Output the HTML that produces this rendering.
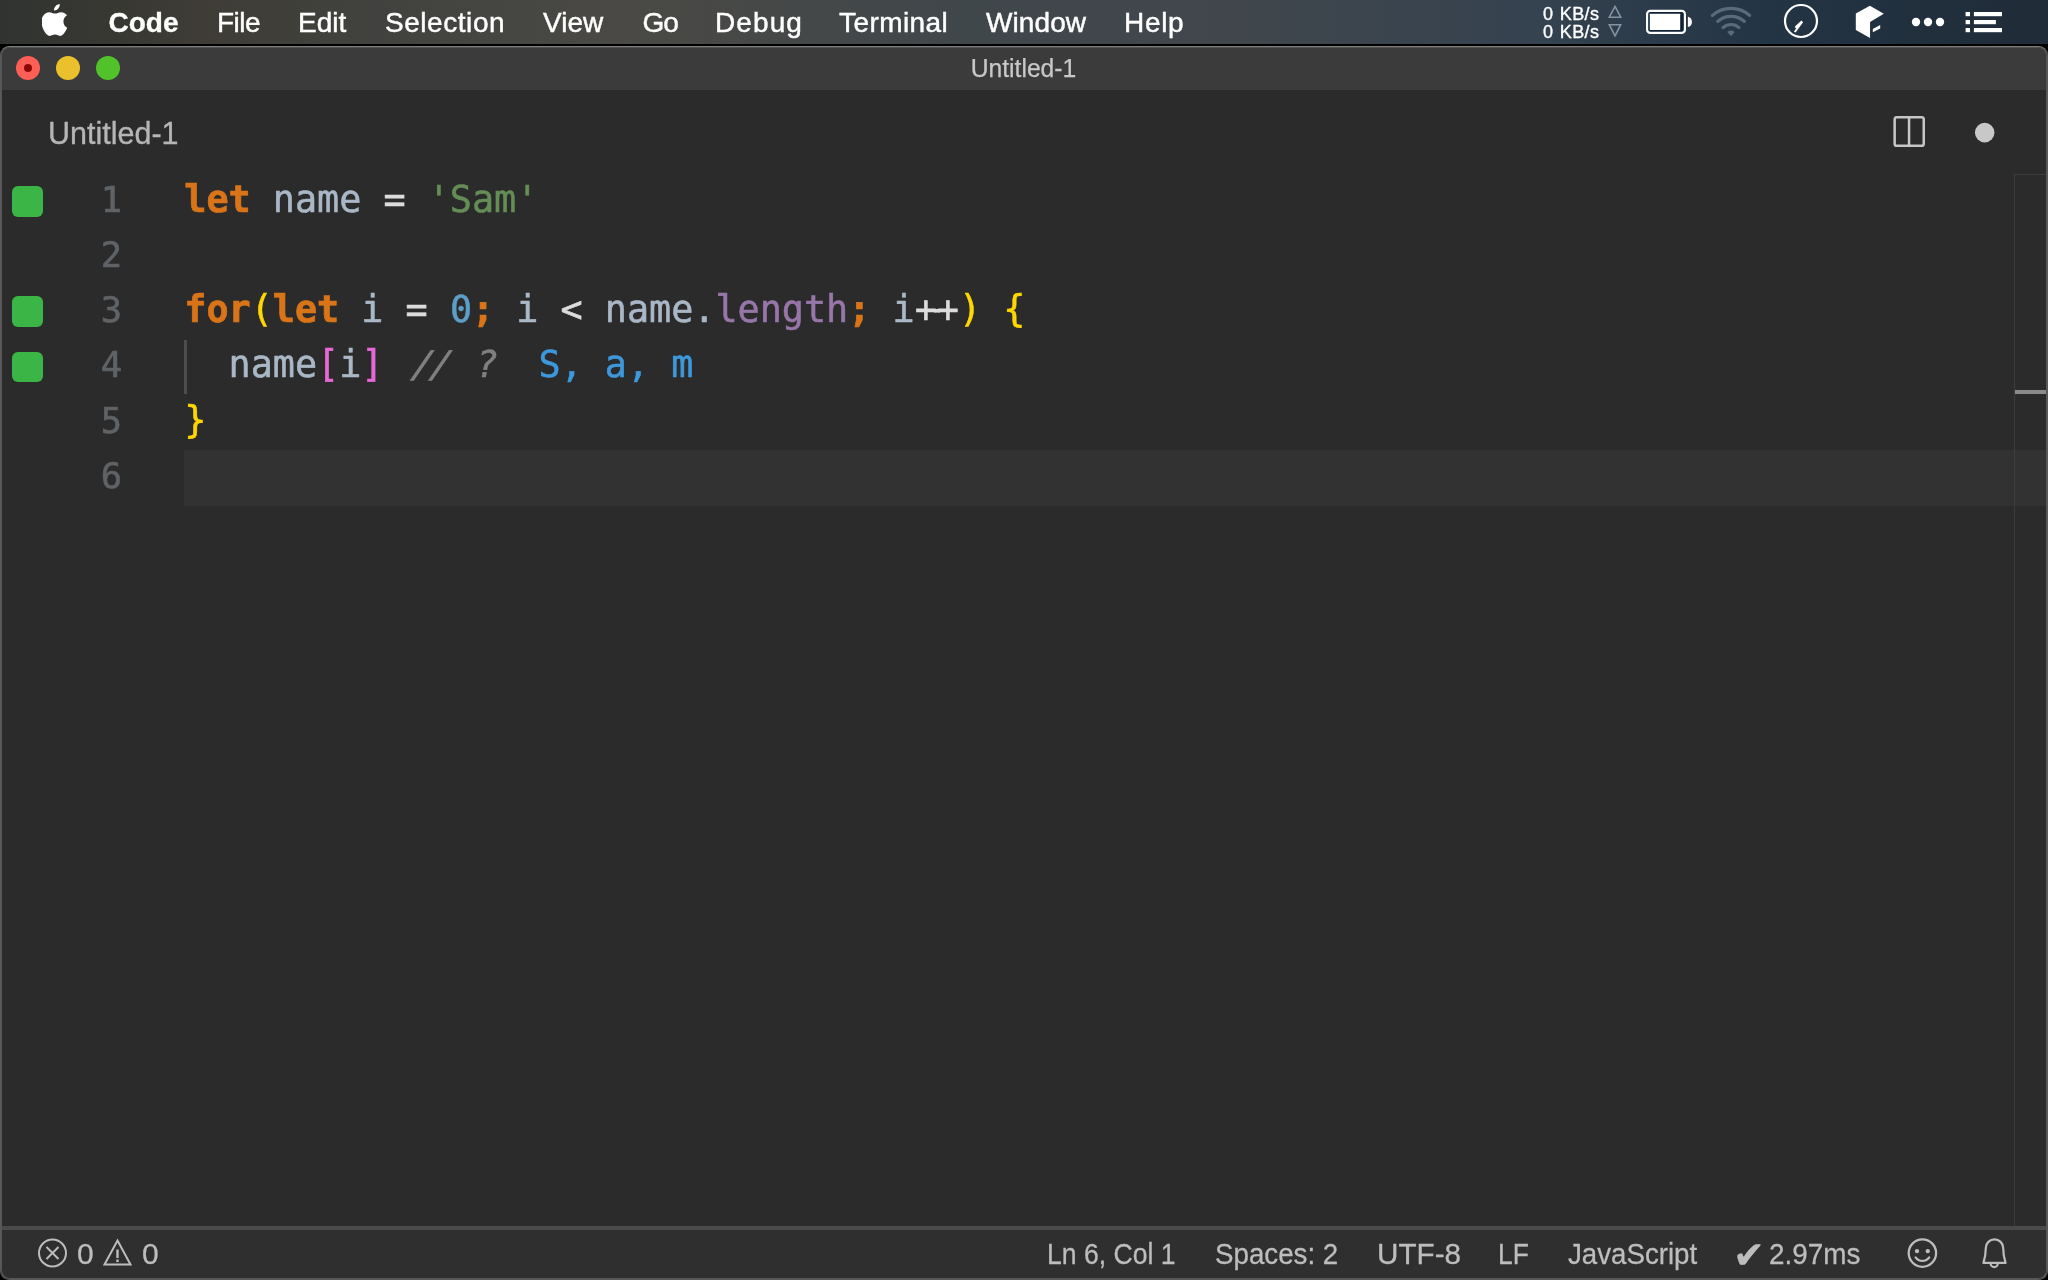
<!DOCTYPE html>
<html lang="en">
<head>
<meta charset="utf-8">
<title>Untitled-1</title>
<style>
*{margin:0;padding:0;box-sizing:border-box}
html,body{width:2048px;height:1280px;overflow:hidden;background:#000}
body{position:relative;font-family:"Liberation Sans",sans-serif;-webkit-font-smoothing:antialiased}
.abs{position:absolute}
/* ---------- mac menu bar ---------- */
#menubar{will-change:transform;position:absolute;left:0;top:0;width:2048px;height:44px;
 background:linear-gradient(90deg,#303330 0px,#3e3c35 200px,#41423f 368px,#4a4945 623px,#40474b 967px,#41474c 1200px,#35424f 1540px,#233444 1768px,#202c38 2028px,#202c38 2048px);}
#menubar .mi{position:absolute;top:1px;height:44px;line-height:44px;font-size:28px;color:#fff;white-space:nowrap;transform-origin:0 50%;-webkit-text-stroke:0.45px #fff}
#menubar .mi.b{font-weight:bold;-webkit-text-stroke:0.3px #fff}
#menuline{position:absolute;left:0;top:43.500px;width:2048px;height:2.500px;background:linear-gradient(180deg,rgba(0,0,0,0) 0,rgba(0,0,0,0.5) 0.800px,#000 1.600px,#000 2.500px)}
.net{position:absolute;left:1543px;font-size:18px;line-height:18px;color:#fff;white-space:nowrap;letter-spacing:0.400px;word-spacing:1px;-webkit-text-stroke:0.35px #fff}
/* ---------- window ---------- */
#win{will-change:transform;position:absolute;left:0;top:46px;width:2048px;height:1234px;background:#2b2b2b;border-radius:9.500px;overflow:hidden}
#winborder{position:absolute;left:0;top:46px;width:2048px;height:1234px;border:1px solid #595959;border-top-color:#7e7e7e;border-radius:9.500px;pointer-events:none}
#winborder2{position:absolute;left:1px;top:47px;width:2046px;height:1232px;border:1px solid #565656;border-top-color:#525252;border-radius:8.500px;pointer-events:none}
#titlebar{position:absolute;left:0;top:0;width:2048px;height:44px;background:#3b3b3b}
.tl{position:absolute;top:10px;width:24px;height:24px;border-radius:50%}
#title{position:absolute;left:0;width:2047px;top:0;height:44px;line-height:44px;text-align:center;font-size:25px;color:#c8c8c8;transform:scaleX(0.986);-webkit-text-stroke:0.25px;margin-top:-0.500px}
#tab{-webkit-text-stroke:0.35px;position:absolute;left:48px;top:61.500px;font-size:32px;line-height:50px;color:#b5b5b5;white-space:nowrap;transform:scaleX(0.953);transform-origin:0 50%}
/* ---------- editor ---------- */
#editor{position:absolute;left:0;top:127.600px;width:2048px;height:1052.400px}
.hl{position:absolute;left:184px;top:276.100px;width:1864px;height:56px;background:#323232}
.gs{position:absolute;left:12px;width:30.600px;height:30.800px;border-radius:6px;background:#3bb546}
.ln{position:absolute;margin-top:-1.900px;left:60px;width:62px;text-align:right;height:55.220px;line-height:55.220px;font-family:"DejaVu Sans Mono","Liberation Mono",monospace;font-size:35.400px;color:#606366;-webkit-text-stroke:0.6px}
.cl{position:absolute;margin-top:-1.900px;left:184.300px;height:55.220px;line-height:55.220px;white-space:pre;font-family:"DejaVu Sans Mono","Liberation Mono",monospace;font-size:36.76px;color:#a9b7c6;-webkit-text-stroke:0.55px}
.k{color:#d97518;font-weight:bold;-webkit-text-stroke:0.7px}
.o{color:#dcdcdc}
.s{color:#648e56}
.lig{background:linear-gradient(#dcdcdc,#dcdcdc) no-repeat;background-size:6px 3.600px;background-position:50% 20.900px}
.n{color:#5d9ec7}
.p{color:#9876aa}
.y{color:#ffd700}
.m{color:#e868d8}
.c{color:#808080;font-style:italic}
.q{color:#3d98dc}
.sl{display:inline-block;letter-spacing:-3.800px;margin-right:7.600px;transform:translateX(6.600px) skewX(-10deg)}
.qm{display:inline-block;transform:translateX(4px)}
#guide{position:absolute;left:184.200px;top:166.400px;width:2.500px;height:53.600px;background:#4d4d4d}
#ruler{position:absolute;left:2014px;top:0.400px;width:34px;height:1053px;border-left:1px solid #3f3d3b;border-top:1px solid #3f3d3b}
#rmark{position:absolute;left:2015px;top:216.400px;width:33px;height:4px;background:#8a8a8a}
/* ---------- status bar ---------- */
#statusline{position:absolute;left:0;top:1180px;width:2048px;height:4px;background:#4a4a4a}
#status{position:absolute;left:0;top:1184px;width:2048px;height:50px;background:#2f2f2f}
.st{position:absolute;top:0;height:48px;line-height:48px;font-size:30.300px;color:#bdbdbd;-webkit-text-stroke:0.3px;white-space:nowrap;transform-origin:0 50%}
</style>
</head>
<body>

<div id="menubar">
  <svg class="abs" style="left:42.400px;top:4px" width="26.200" height="32.600" viewBox="0 0 27 33" preserveAspectRatio="none"><path fill="#fff" d="M18.3 0c.2 1.700-.5 3.400-1.500 4.600-1.100 1.200-2.800 2.200-4.400 2-.2-1.600.6-3.300 1.500-4.400C15 1 16.800.1 18.300 0zM26 24c-.7 1.600-1 2.300-2 3.800-1.300 2-3.100 4.500-5.400 4.500-2 0-2.500-1.300-5.300-1.300-2.700 0-3.300 1.300-5.300 1.300-2.300 0-4-2.300-5.300-4.300C-1 22.400-1.400 15.800.9 12.300c1.600-2.500 4.200-4 6.600-4 2.500 0 4 1.400 6.100 1.400 2 0 3.200-1.400 6.100-1.400 2.200 0 4.500 1.200 6.100 3.200-5.400 3-4.500 10.600.2 12.500z"/></svg>
  <span class="mi b" style="left:108.500px">Code</span>
  <span class="mi" style="left:217px;letter-spacing:-0.5px">File</span>
  <span class="mi" style="left:298px">Edit</span>
  <span class="mi" style="left:385px;letter-spacing:0.55px">Selection</span>
  <span class="mi" style="left:543px">View</span>
  <span class="mi" style="left:642.5px;letter-spacing:-1px">Go</span>
  <span class="mi" style="left:715px;letter-spacing:1.1px">Debug</span>
  <span class="mi" style="left:839px;letter-spacing:0.43px">Terminal</span>
  <span class="mi" style="left:986px;letter-spacing:0.1px">Window</span>
  <span class="mi" style="left:1124px;letter-spacing:0.67px">Help</span>
  <span class="net" style="top:5px">0 KB/s</span>
  <span class="net" style="top:22.700px">0 KB/s</span>
  <svg class="abs" style="left:1600px;top:0" width="448" height="44" viewBox="1600 0 448 44">
    <!-- net arrows -->
    <path d="M1615 6.400 L1620.700 17.200 L1609.300 17.200 Z" fill="none" stroke="#8593a0" stroke-width="1.600"/>
    <path d="M1615 35.800 L1620.700 24.700 L1609.300 24.700 Z" fill="none" stroke="#8593a0" stroke-width="1.600"/>
    <!-- battery -->
    <rect x="1647.100" y="10.900" width="37.800" height="22" rx="3.200" ry="3.200" fill="#0e2136" stroke="#fff" stroke-width="2.200"/>
    <rect x="1649.800" y="13.700" width="30.400" height="16.400" rx="0.600" fill="#fff"/>
    <path d="M1687.900 16.800 C1693.300 17.600 1693.300 26.300 1687.900 27.100 Z" fill="#fff"/>
    <!-- wifi -->
    <g fill="none" stroke="#586a7c" stroke-width="3.100" stroke-linecap="round">
      <path d="M1712.310 15.480 A28.200 28.200 0 0 1 1749.690 15.480"/>
      <path d="M1717.620 21.470 A20.200 20.200 0 0 1 1744.380 21.470"/>
      <path d="M1722.980 27.540 A12.100 12.100 0 0 1 1739.020 27.540"/>
    </g>
    <path d="M1731 36.300 L1727.300 31.900 A5.900 5.900 0 0 1 1734.700 31.900 Z" fill="#586a7c"/>
    <!-- gauge -->
    <circle cx="1801" cy="21" r="16" fill="none" stroke="#fff" stroke-width="2.200"/>
    <path d="M1801.400 20.600 L1803.100 22.300 L1795.600 32.600 L1793.900 31.800 L1796.300 28 L1794.700 27.500 L1795.200 26.300 Z" fill="#fff"/>
    <!-- cube -->
    <path d="M1869.900 5.840 L1883.800 13.750 L1870.070 22 L1870.070 38.100 L1855.800 29.900 L1855.800 13.600 Z" fill="#fff"/>
    <path d="M1872.800 29 L1880.200 25.100 L1880.200 28.500 L1872.800 32.300 Z" fill="#fff"/>
    <!-- dots -->
    <circle cx="1916" cy="22" r="4.200" fill="#fff"/><circle cx="1928" cy="22" r="4.200" fill="#fff"/><circle cx="1940" cy="22" r="4.200" fill="#fff"/>
    <!-- list -->
    <g fill="#fff">
      <rect x="1965.600" y="12" width="4.400" height="4.200"/><rect x="1973.900" y="12" width="28.100" height="4.200"/>
      <rect x="1965.600" y="20" width="4.400" height="4.200"/><rect x="1973.900" y="20" width="22" height="4.200"/>
      <rect x="1965.600" y="28" width="4.400" height="4.200"/><rect x="1973.900" y="28" width="28.100" height="4.200"/>
    </g>
  </svg>
</div>
<div id="menuline"></div>

<div id="win">
  <div id="titlebar">
    <div class="tl" style="left:16px;background:#fd5f57"></div>
    <div class="abs" style="left:24px;top:18px;width:8px;height:8px;border-radius:50%;background:#8c0a04"></div>
    <div class="tl" style="left:56px;background:#ebc02d"></div>
    <div class="tl" style="left:96px;background:#52c22b"></div>
    <div id="title">Untitled-1</div>
  </div>
  <div id="tab">Untitled-1</div>
  <svg class="abs" style="left:1890px;top:66px" width="120" height="40" viewBox="1890 112 120 40">
    <rect x="1894.650" y="117.150" width="29.100" height="28.700" rx="2.200" fill="none" stroke="#c6c6c6" stroke-width="2.500"/>
    <path d="M1909.050 117 V146" stroke="#c6c6c6" stroke-width="2.500"/>
    <circle cx="1984.700" cy="132.600" r="9.800" fill="#c8c8c8"/>
  </svg>

  <div id="editor">
    <div class="hl"></div>
    <div id="guide"></div>
    <div class="gs" style="top:12.4px"></div>
    <div class="gs" style="top:122.84px"></div>
    <div class="gs" style="top:178.06px"></div>
    <div class="ln" style="top:0.0px">1</div>
    <div class="ln" style="top:55.22px">2</div>
    <div class="ln" style="top:110.44px">3</div>
    <div class="ln" style="top:165.66px">4</div>
    <div class="ln" style="top:220.88px">5</div>
    <div class="ln" style="top:276.1px">6</div>
    <div class="cl" style="top:0.0px"><span class="k">let</span> name <span class="o">=</span> <span class="s">'Sam'</span></div>
    <div class="cl" style="top:110.44px"><span class="k">for</span><span class="y">(</span><span class="k">let</span> i <span class="o">=</span> <span class="n">0</span><span class="k">;</span> i <span class="o">&lt;</span> name.<span class="p">length</span><span class="k">;</span> i<span class="o lig">++</span><span class="y">)</span> <span class="y">{</span></div>
    <div class="cl" style="top:165.66px">  name<span class="m">[</span>i<span class="m">]</span> <span class="c"><span class="sl">//</span> <span class="qm">?</span></span>  <span class="q">S, a, m</span></div>
    <div class="cl" style="top:220.88px"><span class="y">}</span></div>
    <div id="ruler"></div>
    <div id="rmark"></div>
  </div>

  <div id="statusline"></div>
  <div id="status">
    <svg class="abs" style="left:30px;top:0" width="120" height="50" viewBox="30 1230 120 50">
      <circle cx="52.500" cy="1253" r="13.500" fill="none" stroke="#bdbdbd" stroke-width="2"/>
      <path d="M46.500 1247 L58.500 1259 M58.500 1247 L46.500 1259" stroke="#bdbdbd" stroke-width="2" fill="none"/>
      <path d="M117.500 1240.500 L130.500 1264.500 L104.500 1264.500 Z" fill="none" stroke="#bdbdbd" stroke-width="2" stroke-linejoin="miter"/>
      <path d="M117.500 1249.500 V1258" stroke="#bdbdbd" stroke-width="2.400"/>
      <rect x="116.300" y="1259.500" width="2.400" height="2.600" fill="#bdbdbd"/>
    </svg>
    <span class="st" style="left:77px;top:-0.400px;transform:scaleX(0.990)">0</span>
    <span class="st" style="left:142px;top:-0.400px;transform:scaleX(0.990)">0</span>
    <span class="st" style="left:1047.200px;top:-0.400px;transform:scaleX(0.877)">Ln 6, Col 1</span>
    <span class="st" style="left:1215px;top:-0.400px;transform:scaleX(0.915)">Spaces: 2</span>
    <span class="st" style="left:1376.600px;top:-0.400px;transform:scaleX(0.979)">UTF-8</span>
    <span class="st" style="left:1497.500px;top:-0.400px;transform:scaleX(0.871)">LF</span>
    <span class="st" style="left:1567.500px;top:-0.400px;transform:scaleX(0.913)">JavaScript</span>
    <span class="st" style="left:1733px;top:0.500px;font-family:'DejaVu Sans',sans-serif;font-size:38px">✔</span>
    <span class="st" style="left:1768.500px;top:-0.400px;transform:scaleX(0.919)">2.97ms</span>
    <svg class="abs" style="left:1900px;top:0" width="120" height="50" viewBox="1900 1230 120 50">
      <circle cx="1922.400" cy="1253.100" r="13.700" fill="none" stroke="#bdbdbd" stroke-width="2.300"/>
      <circle cx="1917" cy="1251.100" r="2.200" fill="#bdbdbd"/><circle cx="1927.750" cy="1251.100" r="2.200" fill="#bdbdbd"/>
      <path d="M1915.600 1257.300 A8.200 8.200 0 0 0 1929.200 1257.300" fill="none" stroke="#bdbdbd" stroke-width="2.200" stroke-linecap="round"/>
      <path d="M1983.400 1262.900 L1985.200 1255.500 L1985.800 1248 A8.700 8.700 0 0 1 2003.200 1248 L2003.800 1255.500 L2005.600 1262.900 Z" fill="none" stroke="#bdbdbd" stroke-width="2.200" stroke-linejoin="round"/>
      <path d="M1990.600 1263.500 A3.600 3.600 0 0 0 1997.800 1263.500" fill="none" stroke="#bdbdbd" stroke-width="2.200"/>
    </svg>
  </div>
</div>
<div id="winborder"></div>
<div id="winborder2"></div>

</body>
</html>
